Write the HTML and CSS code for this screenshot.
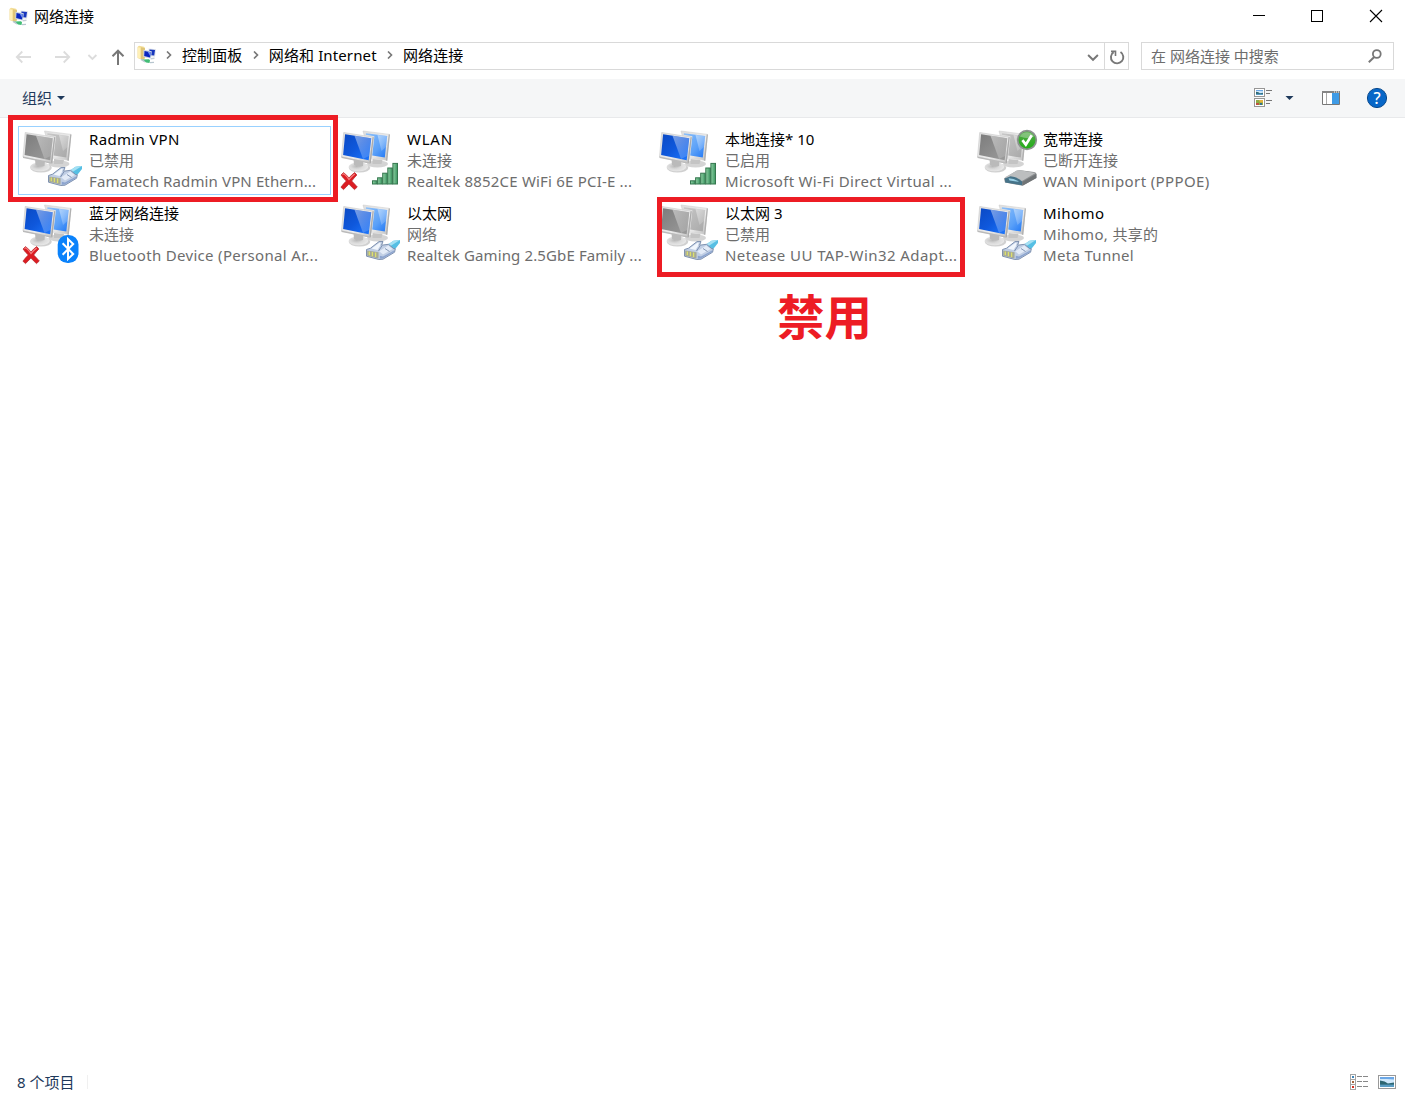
FILE: index.html
```html
<!DOCTYPE html>
<html lang="zh-CN">
<head>
<meta charset="utf-8">
<title>网络连接</title>
<link rel="stylesheet" href="styles.css">
</head>
<body>
<svg class="defs" width="0" height="0" aria-hidden="true">
  <defs>
    <linearGradient id="blue" x1="0" y1="0" x2="1" y2="1"><stop offset="0" stop-color="#0a49c4"/><stop offset=".5" stop-color="#0f58dc"/><stop offset="1" stop-color="#1d78ff"/></linearGradient>
    <linearGradient id="blueback" x1="0" y1="0" x2="1" y2="1"><stop offset="0" stop-color="#8cc0fa"/><stop offset=".6" stop-color="#5aa0f8"/><stop offset="1" stop-color="#1f76f5"/></linearGradient>
    <linearGradient id="grey" x1="0" y1="0" x2="1" y2="1"><stop offset="0" stop-color="#7c7c7c"/><stop offset="1" stop-color="#9c9c9c"/></linearGradient>
    <linearGradient id="greyback" x1="0" y1="0" x2="1" y2="1"><stop offset="0" stop-color="#c8c8c8"/><stop offset="1" stop-color="#a8a8a8"/></linearGradient>
    <linearGradient id="frame" x1="0" y1="0" x2="1" y2="1"><stop offset="0" stop-color="#dedede"/><stop offset=".6" stop-color="#ececec"/><stop offset="1" stop-color="#bdbdbd"/></linearGradient>
    <linearGradient id="shine" x1="0" y1="0" x2="1" y2="1"><stop offset="0" stop-color="#fff" stop-opacity=".45"/><stop offset="1" stop-color="#fff" stop-opacity=".1"/></linearGradient>
    <linearGradient id="bar" x1="0" y1="0" x2="1" y2="0"><stop offset="0" stop-color="#8fd0a4"/><stop offset="1" stop-color="#3b9560"/></linearGradient>
    <linearGradient id="ok" x1="0" y1="0" x2="0" y2="1"><stop offset="0" stop-color="#58a84e"/><stop offset="1" stop-color="#1fae14"/></linearGradient>
    <radialGradient id="base" cx=".4" cy=".45" r=".6"><stop offset="0" stop-color="#b8b8b8"/><stop offset=".5" stop-color="#dadada"/><stop offset="1" stop-color="#e8e8e8"/></radialGradient>

    <symbol id="stand" viewBox="3 1 66 68">
      <ellipse cx="43" cy="39" rx="10.5" ry="3.4" fill="#d4d4d4"/>
      <path d="M28.5 6 55 9.4 52.3 35.3 36 33z" fill="url(#frame)" stroke="#d0d0d0" stroke-width=".6"/>
      <path d="M54.2 9.6 55.4 9.6 52.8 35.9 51.4 35.5z" fill="#b0b0b0"/>
      <path d="M38 34 48 35 47 39 38 39z" fill="#c4c4c4"/>
      <ellipse cx="25" cy="42.8" rx="10.8" ry="4.8" fill="#d0d0d0"/>
      <ellipse cx="24" cy="41.8" rx="9.8" ry="4.4" fill="url(#base)"/>
      <path d="M19 34 29 36 28.5 41Q24 43 19.5 40z" fill="#bababa"/>
      <path d="M9.2 7.5 38.8 12.2 35.8 38 7 32z" fill="url(#frame)" stroke="#cacaca" stroke-width=".6"/>
      <path d="M38 12.3 39.2 12.3 36.3 38.4 35 37.8z" fill="#aaa"/>
      <path d="M7 31.6 35.8 37.6 35.7 38.8 7 33z" fill="#bababa"/>
    </symbol>
    <symbol id="pc-on" viewBox="3 1 66 68">
      <use href="#stand" x="3" y="1" width="66" height="68"/>
      <path d="M31.5 8.3 52.7 11 50.3 32.6 37.7 30.6 39.9 11.3 31.2 9.8z" fill="url(#blueback)"/>
      <path d="M43 9.9 52.7 11 51.5 22 47 26z" fill="url(#shine)"/>
      <path d="M10.6 9.2 36.8 13.3 34.2 35.2 8.6 30.1z" fill="url(#blue)"/>
      <path d="M20 10.7 36.8 13.3 34.6 31 28.5 34z" fill="url(#shine)"/>
    </symbol>
    <symbol id="pc-off" viewBox="3 1 66 68">
      <use href="#stand" x="3" y="1" width="66" height="68"/>
      <path d="M31.5 8.3 52.7 11 50.3 32.6 37.7 30.6 39.9 11.3 31.2 9.8z" fill="url(#greyback)"/>
      <path d="M43 9.9 52.7 11 51.5 22 47 26z" fill="url(#shine)"/>
      <path d="M10.6 9.2 36.8 13.3 34.2 35.2 8.6 30.1z" fill="url(#grey)"/>
      <path d="M20 10.7 36.8 13.3 34.6 31 28.5 34z" fill="url(#shine)"/>
    </symbol>
    <symbol id="plug" viewBox="3 1 66 68">
      <path d="M55 45.5 60.5 41.8 67 41 67 44 61 51.5 57 49.5z" fill="#56bfe4"/>
      <path d="M55 45.5 60.5 41.8 67 41 57.5 47z" fill="#a5e0f3"/>
      <path d="M33.5 50.5 37.5 49.2 46 42.6 50 42.5 48.6 46.2 55.5 45.3 60.5 49.5 62.3 49.8 61.6 53.2 50 60.2 45.8 60.5 33.5 57.2z" fill="#c0cee4" stroke="#7488a8" stroke-width=".9" stroke-linejoin="round"/>
      <path d="M38.5 49.6 46.5 43.8 47.8 43.8 46.8 47.2 44.5 51z" fill="#f1f6fc"/>
      <path d="M46.2 52.2 55.3 46.6 59.7 50 50 55.6z" fill="#e3ebf7"/>
      <path d="M46.8 56.8 50 57.6 61 51.5 60.9 52.9 49.8 59.6 46.8 59.8z" fill="#8ca4cf"/>
      <path d="M34.2 51.4 45.6 53.2 45.5 59.6 34.2 56.8z" fill="#a5a997"/>
      <path d="M36.3 52.4v3.9M39.4 53v4.2M42.6 53.6v4.4" stroke="#dde06c" stroke-width="1.3"/>
      <path d="M45.5 52 49 46.8M52 49.5 56.5 52.5" stroke="#6c82a5" stroke-width=".8"/>
    </symbol>
    <symbol id="wifi" viewBox="3 1 66 68">
      <g fill="url(#bar)" stroke="#35764e" stroke-width="1">
        <rect x="37.5" y="55.3" width="4.6" height="3.2"/><rect x="42.6" y="52.3" width="4.6" height="6.2"/><rect x="47.7" y="47.7" width="4.6" height="10.8"/><rect x="52.8" y="42.5" width="4.6" height="16"/><rect x="57.9" y="37.9" width="4.6" height="20.6"/>
      </g>
    </symbol>
    <symbol id="cross" viewBox="3 1 66 68">
      <path d="M6.5 50 9 47.6Q12.3 50 14.5 53 17 49.8 20.2 47.6L22.4 50Q19.4 53 17.2 56 20 58.8 22.8 62L20 64.6Q16.8 61.8 14.4 59 12 61.8 9 64.6L6.4 62.2Q9 58.6 11.8 56 8.8 53.4 6.5 50z" fill="#dc1c22" stroke="#b3262b" stroke-width=".7"/>
      <path d="M8 49.8 9.2 48.7Q12.5 51.5 14.5 54.6 17.5 51 20.2 49" fill="none" stroke="#f68080" stroke-width="1.1"/>
    </symbol>
    <symbol id="bt" viewBox="3 1 66 68">
      <rect x="42.7" y="36" width="20.8" height="28" rx="9.8" fill="#0a82fb"/>
      <path d="M47.6 44.2 58.2 55 53 60V40L58.2 45 47.6 55.8" fill="none" stroke="#fff" stroke-width="2"/>
    </symbol>
    <symbol id="okmark" viewBox="3 1 66 68">
      <circle cx="57" cy="15" r="9.3" fill="url(#ok)" stroke="#8d9290" stroke-width="1.7"/>
      <path d="M49.7 11.5A8.2 8.2 0 0 1 64 11.3Q60 15 49.7 11.5z" fill="#fff" opacity=".3"/>
      <path d="M52.4 15.2 55.8 19.6 61.7 10.2" fill="none" stroke="#fff" stroke-width="2.7"/>
    </symbol>
    <symbol id="modem" viewBox="3 1 66 68">
      <path d="M34.5 53.5 47 45.8Q49 45 51 45.3L64.5 47Q67 47.5 67 49V53L53 60.8 35.5 57.5z" fill="#8b8e90"/>
      <path d="M35 52.5 47.5 45.6 51 45.3 66 48 52.5 56z" fill="#bcbebf"/>
      <path d="M35.3 53.6 41 51.2Q49 52 53 57L52.5 60.3 35.8 57.4z" fill="#467389"/>
      <path d="M39 53.2Q45 53.4 49.5 56.8L40 55.6z" fill="#9ad0e6"/>
      <path d="M53 56.8 66.8 49V53L53 60.7z" fill="#707476"/>
    </symbol>
    <symbol id="folder" viewBox="0 0 20 20">
      <path d="M.5 2 2 .8 7 1.8 8 3V13.5L5.5 15 .5 13z" fill="#f3dd96"/>
      <path d="M4 2.3 8 3.2V13L5.5 14.6 4 14z" fill="#dfc577"/>
      <path d="M1 2.2 3.3 2.8V13.6L1 12.8z" fill="#fff0b6"/>
      <path d="M11.5 3.5 19 4.2 18 11.8 12 11z" fill="#dce2ea"/>
      <path d="M12.5 4.6 18 5.1 17.2 10.6 12 10z" fill="#1736bd"/>
      <path d="M6.5 4.8 14.8 6.2 14 13.6 6.3 12z" fill="#c7d3e2"/>
      <path d="M7.5 6 13.8 7.2 13 12.4 7.2 11z" fill="#0825c0"/>
      <path d="M10.5 6.6 13.8 7.2 13.2 11z" fill="#6f91ee"/>
      <path d="M5 14.6 12 14.2 13 15.2 12.5 18 9 17.6z" fill="#42bd76"/>
      <path d="M4 14.4 8 16.8M13 17.6 17 17.4" stroke="#b8c6cf" stroke-width="1.4"/>
      <path d="M14 13 17.5 12.6V14L13.5 14.6z" fill="#c5cdd6"/>
    </symbol>
    <symbol id="landscape" viewBox="0 0 8 5" preserveAspectRatio="none">
      <path d="M0 0H8V5H0z" fill="#cfe8fb"/><path d="M0 0H8V1.2L4 1H0z" fill="#6ba7e6"/><path d="M0 1.8Q3 2 4.5 3.2L8 2.8V4H0z" fill="#2d6672"/><path d="M0 3.8H8V5H0z" fill="#5a9dc4"/>
    </symbol>
  </defs>
</svg>

<header class="titlebar">
  <svg class="app-icon" viewBox="0 0 20 20"><use href="#folder"/></svg>
  <h1>网络连接</h1>
  <svg class="window-buttons" viewBox="0 0 134 14" fill="none" stroke="#000" shape-rendering="crispEdges">
    <path d="M1 6.5H13"/><rect x="59.5" y="1.5" width="11" height="11"/>
    <path d="M118 1 130 13M130 1 118 13" shape-rendering="auto" stroke-width="1.1"/>
  </svg>
</header>

<nav class="navbar">
  <svg class="history" viewBox="0 0 134 28" fill="none">
    <g stroke="#dcdcdc" stroke-width="1.8"><path d="M31 15H17M22.3 9.5 16.8 15 22.3 20.5M55 15H69M63.7 9.5 69.2 15 63.7 20.5M88.4 13 92.4 17 96.4 13"/></g>
    <path d="M118 23V9M112.5 14.2 118 8.7 123.5 14.2" stroke="#777" stroke-width="2"/>
  </svg>
  <div class="address">
    <svg class="app-icon" viewBox="0 0 20 20"><use href="#folder"/></svg>
    <svg class="chev" viewBox="0 0 6 8"><path d="M1 .5 4.5 4 1 7.5"/></svg><span class="crumb">控制面板</span>
    <svg class="chev" viewBox="0 0 6 8"><path d="M1 .5 4.5 4 1 7.5"/></svg><span class="crumb">网络和 Internet</span>
    <svg class="chev" viewBox="0 0 6 8"><path d="M1 .5 4.5 4 1 7.5"/></svg><span class="crumb">网络连接</span>
    <svg class="address-tools" viewBox="0 0 41 26" fill="none">
      <path d="M17.5 0V26" stroke="#d9d9d9"/>
      <path d="M1.1 12 6 16.8 10.9 12" stroke="#777" stroke-width="1.9"/>
      <path d="M33.5 9A6.2 6.2 0 1 1 26.6 9.1" stroke="#777" stroke-width="1.9"/><path d="M24 8.4H28.5V13" stroke="#777" stroke-width="1.6"/>
    </svg>
  </div>
  <div class="search"><span>在 网络连接 中搜索</span>
    <svg viewBox="0 0 14 14" fill="none" stroke="#777" stroke-width="1.8"><circle cx="8.8" cy="5" r="3.9"/><path d="M6.2 8 .8 13.2" stroke-width="2"/></svg>
  </div>
</nav>

<div class="toolbar">
  <span>组织</span>
  <svg class="drop" viewBox="0 0 8 4"><path d="M0 0H8L4 4z"/></svg>
  <svg class="view-tools" viewBox="0 0 140 22">
    <g fill="#fff" stroke="#969696"><rect x=".5" y="1.5" width="10" height="8"/><rect x=".5" y="11.5" width="10" height="8"/></g>
    <use href="#landscape" x="2" y="3" width="7" height="5"/>
    <path d="M2 13H9V18H2z" fill="#8dab45"/><path d="M5 13H9V15.5H6z" fill="#e4b23e"/><path d="M2 16H5V18H2z" fill="#bd5340"/><path d="M6 16H8V18H6z" fill="#35728c"/>
    <path d="M12 3.5H18M12 6.5H16M12 13.5H18M12 16.5H16" stroke="#777"/>
    <path d="M31.5 9H39.5L35.5 13z" fill="#1e395b"/>
    <path d="M68.5 4.5H85.5V17.5H68.5z" fill="#fff" stroke="#777"/><path d="M68 4H86V6H68z" fill="#858585"/><path d="M72.5 6V17" stroke="#a9a9a9"/><path d="M78 6H85V17H78z" fill="#3f9be6"/><path d="M80 5H81M82 5H83M84 5H85" stroke="#fff"/>
    <circle cx="123" cy="11" r="9.6" fill="#0867c8" stroke="#07488d"/>
    <text x="123" y="16.6" text-anchor="middle" class="help">?</text>
  </svg>
</div>

<main>
  <ul class="connections">
    <li class="focused"><svg viewBox="3 1 66 68"><use href="#pc-off" x="4" y="1" width="66" height="68"/><use href="#plug" x="3" y="1" width="66" height="68"/></svg>
      <div><b class="t3">Radmin VPN</b><span>已禁用</span><span class="t1">Famatech Radmin VPN Ethern...</span></div></li>
    <li><svg viewBox="3 1 66 68"><use href="#pc-on" x="4.5" y="1" width="66" height="68"/><use href="#wifi" x="5" y="1.5" width="66" height="68"/><use href="#cross" x="4.5" y="1" width="66" height="68"/></svg>
      <div><b class="t6">WLAN</b><span>未连接</span><span class="t2">Realtek 8852CE WiFi 6E PCI-E ...</span></div></li>
    <li><svg viewBox="3 1 66 68"><use href="#pc-on" x="4.5" y="1" width="66" height="68"/><use href="#wifi" x="5" y="1.5" width="66" height="68"/></svg>
      <div><b>本地连接* 10</b><span>已启用</span><span class="t3">Microsoft Wi-Fi Direct Virtual ...</span></div></li>
    <li><svg viewBox="3 1 66 68"><use href="#pc-off" x="4.5" y="1" width="66" height="68"/><use href="#modem" x="3.5" y="1" width="66" height="68"/><use href="#okmark" x="4" y="1" width="66" height="68"/></svg>
      <div><b>宽带连接</b><span>已断开连接</span><span class="t4">WAN Miniport (PPPOE)</span></div></li>
    <li><svg viewBox="3 1 66 68"><use href="#pc-on" x="4" y="1" width="66" height="68"/><use href="#cross" x="4.5" y="1" width="66" height="68"/><use href="#bt" x="3" y="1" width="66" height="68"/></svg>
      <div><b>蓝牙网络连接</b><span>未连接</span><span class="t3">Bluetooth Device (Personal Ar...</span></div></li>
    <li><svg viewBox="3 1 66 68"><use href="#pc-on" x="4.5" y="1" width="66" height="68"/><use href="#plug" x="3" y="1" width="66" height="68"/></svg>
      <div><b>以太网</b><span>网络</span><span class="t1">Realtek Gaming 2.5GbE Family ...</span></div></li>
    <li><svg viewBox="3 1 66 68"><use href="#pc-off" x="4.5" y="1" width="66" height="68"/><use href="#plug" x="3" y="1" width="66" height="68"/></svg>
      <div><b>以太网 3</b><span>已禁用</span><span class="t5">Netease UU TAP-Win32 Adapt...</span></div></li>
    <li><svg viewBox="3 1 66 68"><use href="#pc-on" x="4.5" y="1" width="66" height="68"/><use href="#plug" x="3" y="1" width="66" height="68"/></svg>
      <div><b class="t5">Mihomo</b><span class="t3">Mihomo, 共享的</span><span class="t3">Meta Tunnel</span></div></li>
  </ul>
  <div class="mark mark-radmin"></div>
  <div class="mark mark-netease"></div>
  <div class="mark-label">禁用</div>
</main>

<footer class="statusbar">
  <span>8 个项目</span>
  <svg viewBox="0 0 46 16">
    <g fill="#fff" stroke="#a5a5a5"><rect x=".5" y=".5" width="5" height="5"/><rect x=".5" y="5.5" width="5" height="5"/><rect x=".5" y="10.5" width="5" height="5"/></g>
    <path d="M2 2H4V4H2z" fill="#3d84b8"/><path d="M2 7H4V9H2z" fill="#a5663e"/><path d="M2 12H4V14H2z" fill="#d52f20"/>
    <path d="M7 2.5H12M13 2.5H18M7 7.5H12M13 7.5H18M7 12.5H12M13 12.5H18" stroke="#888"/>
    <rect x="28.5" y="1.5" width="17" height="13" fill="#fff" stroke="#999"/>
    <use href="#landscape" x="30" y="3" width="14" height="10"/>
  </svg>
</footer>
</body>
</html>
```
FILE: styles.css
```css
* { box-sizing: border-box; }
body {
  margin: 0;
  height: 1094px;
  display: flex;
  flex-direction: column;
  background: #fff;
  color: #000;
  font: 15px/21px "Noto Sans", "Noto Sans CJK SC", sans-serif;
  overflow: hidden;
  white-space: nowrap;
}
svg { display: block; flex: none; }
.defs { position: absolute; }
.app-icon { width: 20px; height: 20px; }

.titlebar { height: 34px; display: flex; align-items: center; padding-left: 9px; }
.titlebar h1 { margin: 0 0 2px 5px; font-size: 15px; font-weight: 400; }
.window-buttons { width: 134px; height: 14px; margin-left: auto; margin-right: 19px; margin-bottom: 2px; }

.navbar { height: 45px; display: flex; align-items: flex-start; padding-top: 8px; }
.history { width: 134px; height: 28px; }
.address { width: 995px; height: 28px; display: flex; align-items: center; border: 1px solid #d9d9d9; padding-left: 2px; }
.address .app-icon { margin-bottom: 2px; }
.address .chev { width: 6px; height: 8px; margin: 0 10px 2px 9px; fill: none; stroke: #777; stroke-width: 1.6; }
.crumb { letter-spacing: .12px; margin: 0 1.3px 2px 0; }
.address-tools { width: 41px; height: 26px; margin-left: auto; }
.search { width: 253px; height: 28px; margin-left: 12px; display: flex; align-items: center; justify-content: space-between; border: 1px solid #d9d9d9; padding: 0 11px 0 9px; color: #6d6d6d; }
.search svg { width: 14px; height: 14px; }

.toolbar { height: 39px; display: flex; align-items: center; padding-left: 22px; background: #f5f6f7; border-bottom: 1px solid #e8e9eb; color: #1e395b; }
.drop { width: 8px; height: 4px; margin-left: 5px; fill: #1e395b; }
.view-tools { width: 140px; height: 22px; margin-left: auto; margin-right: 11px; }
.help { font: 500 16px "Noto Sans", sans-serif; fill: #fff; }

main { position: relative; flex: 1; padding: 8px 0 0 18px; }
.connections { list-style: none; margin: 0; padding: 0; display: grid; grid-template-columns: repeat(4, 313px); grid-auto-rows: 69px; gap: 5px; }
.connections li { display: flex; gap: 5px; }
.connections li > svg { width: 66px; height: 68px; overflow: visible; }
.connections li.focused { outline: 1px solid #99d1ff; outline-offset: -1px; }
.connections div { display: flex; flex-direction: column; padding-top: 3px; }
.connections b { font-weight: 400; }
.connections span { color: #6d6d6d; }
.t1 { letter-spacing: .13px; }
.t2 { letter-spacing: .2px; }
.t3 { letter-spacing: .32px; }
.t4 { letter-spacing: .39px; }
.t5 { letter-spacing: .42px; }
.t6 { letter-spacing: .75px; }
.mark { position: absolute; border: 5px solid #ed1c24; }
.mark-radmin { left: 8px; top: -3px; width: 330px; height: 87px; }
.mark-netease { left: 657px; top: 79px; width: 308px; height: 80px; }
.mark-label { position: absolute; left: 777px; top: 162px; font: 700 47.5px/70px "Noto Sans CJK SC", sans-serif; color: #ed1c24; }

.statusbar { height: 24px; display: flex; align-items: center; justify-content: space-between; padding: 0 9px 0 17px; color: #1e395b; }
.statusbar span { padding-right: 13px; border-right: 1px solid #f0f0f0; line-height: 14px; }
.statusbar svg { width: 46px; height: 16px; }
```
